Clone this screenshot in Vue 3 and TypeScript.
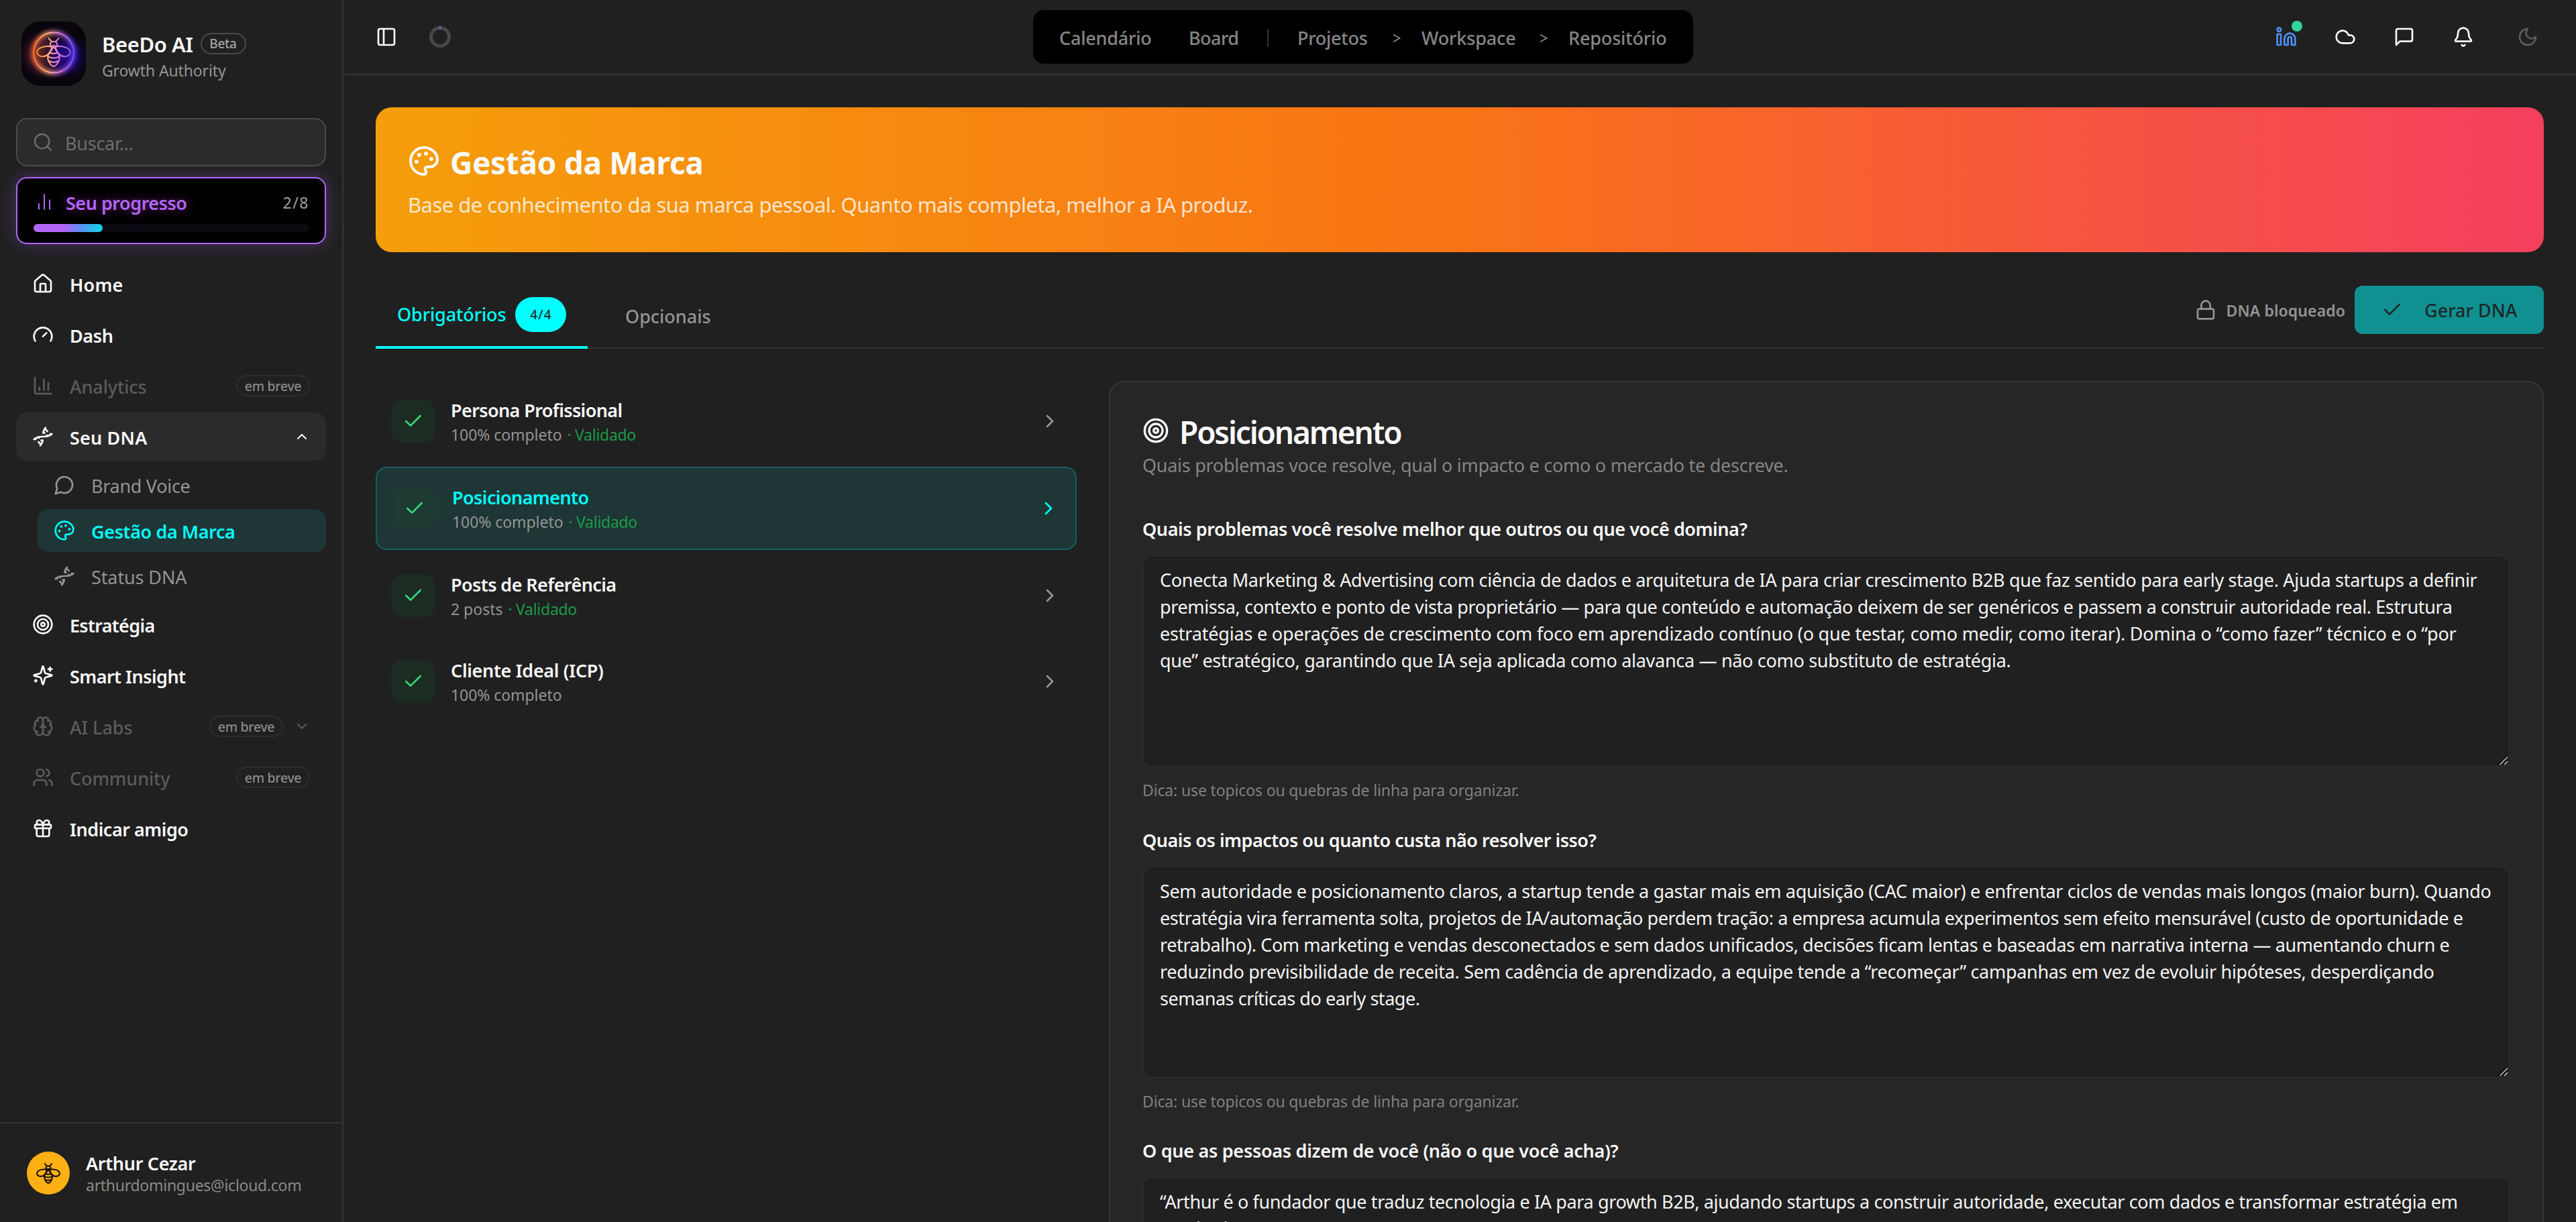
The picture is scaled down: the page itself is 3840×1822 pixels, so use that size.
<script setup lang="ts">
interface NavItem {
  label: string
  icon: string
  width: number
  muted?: boolean
  open?: boolean
  chevron?: string
  children?: { label: string; icon: string; width: number; active?: boolean }[]
}

type Line = [text: string, width: number]

const icons: Record<string, string> = {
  house:
    '<path d="M15 21v-8a1 1 0 0 0-1-1h-4a1 1 0 0 0-1 1v8"/><path d="M3 10a2 2 0 0 1 .709-1.528l7-5.999a2 2 0 0 1 2.582 0l7 5.999A2 2 0 0 1 21 10v9a2 2 0 0 1-2 2H5a2 2 0 0 1-2-2z"/>',
  gauge: '<path d="m12 14 4-4"/><path d="M3.34 19a10 10 0 1 1 17.32 0"/>',
  chart: '<path d="M3 3v16a2 2 0 0 0 2 2h16"/><path d="M18 17V9"/><path d="M13 17V5"/><path d="M8 17v-3"/>',
  bars: '<path d="M18 20V10"/><path d="M12 20V4"/><path d="M6 20v-6"/>',
  dna: '<path d="m10 16 1.5 1.5"/><path d="m14 8-1.5-1.5"/><path d="M15 2c-1.798 1.998-2.518 3.995-2.807 5.993"/><path d="m16.5 10.5 1 1"/><path d="m17 6-2.891-2.891"/><path d="M2 15c6.667-6 13.333 0 20-6"/><path d="m20 9 .891.891"/><path d="M3.109 14.109 4 15"/><path d="m6.5 12.5 1 1"/><path d="m7 18 2.891 2.891"/><path d="M9 22c1.798-1.998 2.518-3.995 2.807-5.993"/>',
  messageCircle: '<path d="M7.9 20A9 9 0 1 0 4 16.1L2 22Z"/>',
  palette:
    '<circle cx="13.5" cy="6.5" r=".5" fill="currentColor"/><circle cx="17.5" cy="10.5" r=".5" fill="currentColor"/><circle cx="8.5" cy="7.5" r=".5" fill="currentColor"/><circle cx="6.5" cy="12.5" r=".5" fill="currentColor"/><path d="M12 2C6.5 2 2 6.5 2 12s4.5 10 10 10c.926 0 1.648-.746 1.648-1.688 0-.437-.18-.835-.437-1.125-.29-.289-.438-.652-.438-1.125a1.64 1.64 0 0 1 1.668-1.668h1.996c3.051 0 5.555-2.503 5.555-5.554C21.965 6.012 17.461 2 12 2z"/>',
  target: '<circle cx="12" cy="12" r="10"/><circle cx="12" cy="12" r="6"/><circle cx="12" cy="12" r="2"/>',
  sparkles:
    '<path d="M9.937 15.5A2 2 0 0 0 8.5 14.063l-6.135-1.582a.5.5 0 0 1 0-.962L8.5 9.936A2 2 0 0 0 9.937 8.5l1.582-6.135a.5.5 0 0 1 .963 0L14.063 8.5A2 2 0 0 0 15.5 9.937l6.135 1.581a.5.5 0 0 1 0 .964L15.5 14.063a2 2 0 0 0-1.437 1.437l-1.582 6.135a.5.5 0 0 1-.963 0z"/><path d="M20 3v4"/><path d="M22 5h-4"/><path d="M4 17v2"/><path d="M5 18H3"/>',
  brain:
    '<path d="M12 5a3 3 0 1 0-5.997.125 4 4 0 0 0-2.526 5.77 4 4 0 0 0 .556 6.588A4 4 0 1 0 12 18Z"/><path d="M12 5a3 3 0 1 1 5.997.125 4 4 0 0 1 2.526 5.77 4 4 0 0 1-.556 6.588A4 4 0 1 1 12 18Z"/><path d="M15 13a4.5 4.5 0 0 1-3-4 4.5 4.5 0 0 1-3 4"/><path d="M17.599 6.5a3 3 0 0 0 .399-1.375"/><path d="M6.003 5.125A3 3 0 0 0 6.401 6.5"/><path d="M3.477 10.896a4 4 0 0 1 .585-.396"/><path d="M19.938 10.5a4 4 0 0 1 .585.396"/><path d="M6 18a4 4 0 0 1-1.967-.516"/><path d="M19.967 17.484A4 4 0 0 1 18 18"/>',
  users:
    '<path d="M16 21v-2a4 4 0 0 0-4-4H6a4 4 0 0 0-4 4v2"/><circle cx="9" cy="7" r="4"/><path d="M22 21v-2a4 4 0 0 0-3-3.87"/><path d="M16 3.13a4 4 0 0 1 0 7.75"/>',
  gift: '<rect x="3" y="8" width="18" height="4" rx="1"/><path d="M12 8v13"/><path d="M19 12v7a2 2 0 0 1-2 2H7a2 2 0 0 1-2-2v-7"/><path d="M7.5 8a2.5 2.5 0 0 1 0-5A4.8 8 0 0 1 12 8a4.8 8 0 0 1 4.5-5 2.5 2.5 0 0 1 0 5"/>',
  search: '<circle cx="11" cy="11" r="8"/><path d="m21 21-4.3-4.3"/>',
  panel: '<rect width="18" height="18" x="3" y="3" rx="2"/><path d="M9 3v18"/>',
  linkedin:
    '<path d="M16 8a6 6 0 0 1 6 6v7h-4v-7a2 2 0 0 0-2-2 2 2 0 0 0-2 2v7h-4v-7a6 6 0 0 1 6-6z"/><rect width="4" height="12" x="2" y="9"/><circle cx="4" cy="4" r="2"/>',
  cloud: '<path d="M17.5 19H9a7 7 0 1 1 6.71-9h1.79a4.5 4.5 0 1 1 0 9Z"/>',
  message: '<path d="M21 15a2 2 0 0 1-2 2H7l-4 4V5a2 2 0 0 1 2-2h14a2 2 0 0 1 2 2z"/>',
  bell: '<path d="M10.268 21a2 2 0 0 0 3.464 0"/><path d="M3.262 15.326A1 1 0 0 0 4 17h16a1 1 0 0 0 .74-1.673C19.41 13.956 18 12.499 18 8A6 6 0 0 0 6 8c0 4.499-1.411 5.956-2.738 7.326"/>',
  moon: '<path d="M12 3a6 6 0 0 0 9 9 9 9 0 1 1-9-9Z"/>',
  lock: '<rect width="18" height="11" x="3" y="11" rx="2"/><path d="M7 11V7a5 5 0 0 1 10 0v4"/>',
  check: '<path d="M20 6 9 17l-5-5"/>',
  up: '<path d="m18 15-6-6-6 6"/>',
  down: '<path d="m6 9 6 6 6-6"/>',
  right: '<path d="m9 18 6-6-6-6"/>',
}

const bee =
  '<path d="M42.5 36.5C41.5 27.5 54.5 27.5 53.5 36.5Z"/><path d="M44.5 29.5L40.5 25M51.5 29.5L55.5 25"/><path d="M45.5 38C38 35.500 24 38 23.500 45.500C23 52.500 34 54.500 39.500 49C43 45.500 44.500 41.500 45.500 38Z"/><path d="M50.500 38C58 35.500 72 38 72.500 45.500C73 52.500 62 54.500 56.500 49C53 45.500 51.500 41.500 50.500 38Z"/><path d="M48 37C46 42 41 47 39.500 51C38 57 43 66 48 67C53 66 58 57 56.500 51C55 47 50 42 48 37Z"/><path d="M42.500 46.500Q48 49.500 53.500 46.500M39.800 52.500Q48 56.500 56.200 52.500M41 59Q48 62.500 55 59"/>'

const nav: NavItem[] = [
  { label: 'Home', icon: 'house', width: 78 },
  { label: 'Dash', icon: 'gauge', width: 63 },
  { label: 'Analytics', icon: 'chart', width: 113, muted: true },
  {
    label: 'Seu DNA',
    icon: 'dna',
    width: 114,
    open: true,
    chevron: 'up',
    children: [
      { label: 'Brand Voice', icon: 'messageCircle', width: 146 },
      { label: 'Gestão da Marca', icon: 'palette', width: 213, active: true },
      { label: 'Status DNA', icon: 'dna', width: 141 },
    ],
  },
  { label: 'Estratégia', icon: 'target', width: 125 },
  { label: 'Smart Insight', icon: 'sparkles', width: 171 },
  { label: 'AI Labs', icon: 'brain', width: 92, muted: true, chevron: 'down' },
  { label: 'Community', icon: 'users', width: 148, muted: true },
  { label: 'Indicar amigo', icon: 'gift', width: 175 },
]

const sections = [
  { title: 'Persona Profissional', tw: 254, meta: '100% completo', mw: 164, valid: true },
  { title: 'Posicionamento', tw: 202, meta: '100% completo', mw: 164, valid: true, active: true },
  { title: 'Posts de Referência', tw: 245, meta: '2 posts', mw: 76, valid: true },
  { title: 'Cliente Ideal (ICP)', tw: 226, meta: '100% completo', mw: 164 },
]

const fields: { label: string; width: number; lines: Line[] }[] = [
  {
    label: 'Quais problemas você resolve melhor que outros ou que você domina?',
    width: 900,
    lines: [
      ['Conecta Marketing & Advertising com ciência de dados e arquitetura de IA para criar crescimento B2B que faz sentido para early stage. Ajuda startups a definir', 1962],
      ['premissa, contexto e ponto de vista proprietário — para que conteúdo e automação deixem de ser genéricos e passem a construir autoridade real. Estrutura', 1925],
      ['estratégias e operações de crescimento com foco em aprendizado contínuo (o que testar, como medir, como iterar). Domina o “como fazer” técnico e o “por', 1931],
      ['que” estratégico, garantindo que IA seja aplicada como alavanca — não como substituto de estratégia.', 1267],
    ],
  },
  {
    label: 'Quais os impactos ou quanto custa não resolver isso?',
    width: 675,
    lines: [
      ['Sem autoridade e posicionamento claros, a startup tende a gastar mais em aquisição (CAC maior) e enfrentar ciclos de vendas mais longos (maior burn). Quando', 1983],
      ['estratégia vira ferramenta solta, projetos de IA/automação perdem tração: a empresa acumula experimentos sem efeito mensurável (custo de oportunidade e', 1941],
      ['retrabalho). Com marketing e vendas desconectados e sem dados unificados, decisões ficam lentas e baseadas em narrativa interna — aumentando churn e', 1921],
      ['reduzindo previsibilidade de receita. Sem cadência de aprendizado, a equipe tende a “recomeçar” campanhas em vez de evoluir hipóteses, desperdiçando', 1898],
      ['semanas críticas do early stage.', 386],
    ],
  },
  {
    label: 'O que as pessoas dizem de você (não o que você acha)?',
    width: 708,
    lines: [
      ['“Arthur é o fundador que traduz tecnologia e IA para growth B2B, ajudando startups a construir autoridade, executar com dados e transformar estratégia em', 1933],
      ['resultado.”', 132],
    ],
  },
]

// Sets the tracking of a one-line text so that it spans the given number of pixels.
const vSpan = {
  mounted(el: HTMLElement, binding: { value: number }) {
    const range = document.createRange()
    range.selectNodeContents(el)
    const natural = range.getBoundingClientRect().width
    const count = (el.textContent ?? '').trim().length
    el.style.letterSpacing = `${((binding.value + 1.5 - natural) / count).toFixed(3)}px`
  },
}
</script>

<template>
  <div class="app">
    <aside class="sidebar">
      <div class="brand">
        <svg class="logo" viewBox="0 0 96 96">
          <defs>
            <linearGradient id="neon" gradientUnits="userSpaceOnUse" x1="18" y1="46" x2="78" y2="46">
              <stop offset="0" stop-color="#ff6a2b" />
              <stop offset=".35" stop-color="#ffb27a" />
              <stop offset=".6" stop-color="#e07ad8" />
              <stop offset="1" stop-color="#6a4dff" />
            </linearGradient>
            <radialGradient id="warm" gradientUnits="userSpaceOnUse" cx="34" cy="50" r="40">
              <stop offset="0" stop-color="#5a2a1c" />
              <stop offset=".5" stop-color="#4a1b2c" />
              <stop offset="1" stop-color="#0a0510" stop-opacity="0" />
            </radialGradient>
            <radialGradient id="cold" gradientUnits="userSpaceOnUse" cx="66" cy="52" r="38">
              <stop offset="0" stop-color="#2a0a8c" />
              <stop offset=".5" stop-color="#1a0566" stop-opacity=".9" />
              <stop offset="1" stop-color="#08030f" stop-opacity="0" />
            </radialGradient>
            <filter id="glow" x="-40%" y="-40%" width="180%" height="180%">
              <feGaussianBlur stdDeviation="3" />
            </filter>
          </defs>
          <rect width="96" height="96" fill="#09050c" />
          <rect width="96" height="96" fill="url(#warm)" />
          <rect width="96" height="96" fill="url(#cold)" />
          <circle cx="48" cy="46.500" r="30" fill="none" stroke="url(#neon)" stroke-width="5" filter="url(#glow)" />
          <circle cx="48" cy="46.500" r="30" fill="none" stroke="url(#neon)" stroke-width="2" />
          <g fill="none" stroke="url(#neon)" stroke-width="2" stroke-linecap="round" stroke-linejoin="round" v-html="bee" />
        </svg>
        <div class="brand-text">
          <div class="brand-row">
            <strong v-span="134">BeeDo AI</strong>
            <span class="beta"><span v-span="39">Beta</span></span>
          </div>
          <span v-span="183" class="tagline">Growth Authority</span>
        </div>
      </div>

      <div class="search">
        <svg class="icon" viewBox="0 0 24 24" v-html="icons.search" />
        <span v-span="100">Buscar...</span>
      </div>

      <div class="progress">
        <div class="progress-head">
          <svg class="icon" viewBox="0 0 24 24" v-html="icons.bars" />
          <strong v-span="179">Seu progresso</strong>
          <span v-span="38" class="count">2/8</span>
        </div>
        <div class="track"><div class="fill" /></div>
      </div>

      <nav class="menu">
        <template v-for="item in nav" :key="item.label">
          <div class="item" :class="{ muted: item.muted, open: item.open }">
            <svg class="icon" viewBox="0 0 24 24" v-html="icons[item.icon]" />
            <span v-span="item.width" class="item-label">{{ item.label }}</span>
            <span v-if="item.muted" class="soon"><span v-span="83">em breve</span></span>
            <svg v-if="item.chevron" class="chev" viewBox="0 0 24 24" v-html="icons[item.chevron]" />
          </div>
          <div v-for="sub in item.children" :key="sub.label" class="sub" :class="{ active: sub.active }">
            <svg class="icon" viewBox="0 0 24 24" v-html="icons[sub.icon]" />
            <span v-span="sub.width">{{ sub.label }}</span>
          </div>
        </template>
      </nav>

      <div class="user">
        <div class="avatar">
          <svg viewBox="0 0 96 96" v-html="bee" />
        </div>
        <div class="user-text">
          <strong v-span="162">Arthur Cezar</strong>
          <span v-span="320">arthurdomingues@icloud.com</span>
        </div>
      </div>
    </aside>

    <div class="main">
      <header class="topbar">
        <div class="top-left">
          <svg class="icon" viewBox="0 0 24 24" v-html="icons.panel" />
          <svg class="ring" viewBox="0 0 32 32">
            <circle cx="16" cy="16" r="13.500" stroke="#484848" stroke-width="5" fill="none" />
            <path d="M16 .2V5" stroke="#a66be0" stroke-width="1.500" />
          </svg>
        </div>
        <div class="crumbs">
          <span v-span="136" class="c1">Calendário</span>
          <span v-span="73" class="c2">Board</span>
          <i class="bar" />
          <span v-span="103" class="c3">Projetos</span>
          <svg class="gt" viewBox="0 0 12 16"><path d="M1 2.500L10.500 8L1 13.500" /></svg>
          <span v-span="139" class="c4">Workspace</span>
          <svg class="gt" viewBox="0 0 12 16"><path d="M1 2.500L10.500 8L1 13.500" /></svg>
          <span v-span="145">Repositório</span>
        </div>
        <div class="top-right">
          <div class="linkedin">
            <svg class="icon" viewBox="0 0 24 24" v-html="icons.linkedin" />
            <i class="dot" />
          </div>
          <svg class="icon" viewBox="0 0 24 24" v-html="icons.cloud" />
          <svg class="icon" viewBox="0 0 24 24" v-html="icons.message" />
          <svg class="icon" viewBox="0 0 24 24" v-html="icons.bell" />
          <svg class="icon moon" viewBox="0 0 24 24" v-html="icons.moon" />
        </div>
      </header>

      <main class="content">
        <section class="banner">
          <h1>
            <svg class="icon" viewBox="0 0 24 24" v-html="icons.palette" />
            <span v-span="376">Gestão da Marca</span>
          </h1>
          <p v-span="1258">Base de conhecimento da sua marca pessoal. Quanto mais completa, melhor a IA produz.</p>
        </section>

        <div class="tabs">
          <div class="tab active">
            <span v-span="161">Obrigatórios</span>
            <span class="badge"><span v-span="31">4/4</span></span>
          </div>
          <div class="tab second"><span v-span="126">Opcionais</span></div>
          <div class="actions">
            <svg class="icon" viewBox="0 0 24 24" v-html="icons.lock" />
            <span v-span="176" class="locked">DNA bloqueado</span>
            <button class="generate" type="button">
              <svg class="icon" viewBox="0 0 24 24" v-html="icons.check" />
              <span v-span="137">Gerar DNA</span>
            </button>
          </div>
        </div>

        <div class="columns">
          <div class="list">
            <div v-for="s in sections" :key="s.title" class="row" :class="{ active: s.active }">
              <div class="state"><svg class="icon" viewBox="0 0 24 24" v-html="icons.check" /></div>
              <div class="row-text">
                <strong v-span="s.tw">{{ s.title }}</strong>
                <div class="meta">
                  <span v-span="s.mw">{{ s.meta }}</span>
                  <span v-if="s.valid" v-span="101" class="valid">· Validado</span>
                </div>
              </div>
              <svg class="icon" viewBox="0 0 24 24" v-html="icons.right" />
            </div>
          </div>

          <section class="panel">
            <h2>
              <svg class="icon" viewBox="0 0 24 24" v-html="icons.target" />
              <span v-span="329">Posicionamento</span>
            </h2>
            <p v-span="961" class="lead">Quais problemas voce resolve, qual o impacto e como o mercado te descreve.</p>
            <div v-for="f in fields" :key="f.label" class="field">
              <label v-span="f.width">{{ f.label }}</label>
              <div class="area">
                <div v-for="line in f.lines" :key="line[0]" v-span="line[1]" class="line">{{ line[0] }}</div>
                <svg class="grip" viewBox="0 0 14 14">
                  <path d="M0 12.500L12.500 0M6.500 12.500L12.500 6.500" stroke="#000" />
                  <path d="M1.500 13L13 1.500M8 13L13 8" stroke="#c8c8c8" />
                </svg>
              </div>
              <span v-span="560" class="hint">Dica: use topicos ou quebras de linha para organizar.</span>
            </div>
          </section>
        </div>
      </main>
    </div>
  </div>
</template>

<style>
html,
body {
  background: #202020;
  overflow: hidden;
}
</style>

<style scoped>
.app {
  display: flex;
  width: 3840px;
  height: 1822px;
  overflow: hidden;
  background: #202020;
  color: #fafafa;
  font-family: 'Noto Sans', 'Open Sans', sans-serif;
  font-size: 27px;
  line-height: 40px;
  white-space: nowrap;
}

.app *,
.app {
  box-sizing: border-box;
}

strong {
  font-weight: 600;
}

.icon {
  display: block;
  flex: none;
  width: 32px;
  height: 32px;
  fill: none;
  stroke: currentColor;
  stroke-width: 2;
  stroke-linecap: round;
  stroke-linejoin: round;
}

/* Sidebar */
.sidebar {
  display: flex;
  flex-direction: column;
  flex: none;
  width: 512px;
  border-right: 2px solid #363636;
}

.brand {
  display: flex;
  align-items: center;
  gap: 24px;
  height: 96px;
  margin: 32px 32px 48px;
}

.brand-text {
  padding-top: 9px;
}

.logo {
  width: 96px;
  height: 96px;
  border-radius: 28px;
}

.brand-row {
  display: flex;
  align-items: center;
  gap: 11px;
  height: 40px;
}

.brand-row strong {
  font-size: 31px;
}

.beta {
  display: flex;
  align-items: center;
  justify-content: center;
  width: 68px;
  height: 32px;
  margin-top: -3px;
  border: 2px solid #4a4a4a;
  border-radius: 16px;
  color: #a3a3a3;
  font-size: 19px;
  font-weight: 500;
}

.tagline {
  display: block;
  height: 38px;
  margin-top: -1px;
  color: #949494;
  font-size: 23px;
}

.search {
  display: flex;
  align-items: center;
  gap: 17px;
  height: 72px;
  margin: 0 24px 16px;
  padding: 0 22px;
  border: 2px solid #4a4a4a;
  border-radius: 16px;
  background: #2b2b2b;
  color: #6d6d6d;
}

.search span {
  padding-top: 4px;
}

.search .icon {
  stroke-width: 1.75;
}

.progress {
  height: 100px;
  margin: 0 24px 23px;
  padding: 15px 24px 0;
  border: 2px solid #b266f7;
  border-radius: 16px;
  background: #000;
  box-shadow: 0 0 24px rgba(168, 85, 247, 0.3);
}

.progress-head {
  display: flex;
  align-items: center;
  gap: 16px;
  height: 40px;
  color: #b266f7;
}

.progress-head .icon {
  stroke-width: 1.5;
}

.progress-head strong {
  padding-top: 3px;
  text-shadow: 0 0 16px rgba(217, 70, 239, 0.55);
}

.count {
  margin: 1px -1px 0 auto;
  color: #a0a0a0;
  font-size: 23px;
}

.track {
  height: 12px;
  margin-top: 13px;
  border-radius: 6px;
  background: #0e0a12;
}

.fill {
  width: 25.2%;
  height: 12px;
  border-radius: 6px;
  background: linear-gradient(90deg, #b266f7 45%, #5b8ff0 68%, #18cfe8 94%);
}

.menu {
  display: flex;
  flex-direction: column;
  gap: 4px;
  padding: 0 24px;
}

.item {
  display: flex;
  align-items: center;
  height: 72px;
  padding: 0 24px;
  border-radius: 16px;
  font-weight: 600;
}

.item-label {
  flex: 1;
  margin-left: 24px;
  padding-top: 3px;
}

.item.open {
  background: #2b2b2b;
}

.item.muted {
  color: #5b5b5b;
  font-weight: 500;
}

.soon {
  display: flex;
  align-items: center;
  justify-content: center;
  width: 110px;
  height: 32px;
  padding-top: 2px;
  border: 2px solid #2d2d2d;
  border-radius: 16px;
  color: #8b8b8b;
  font-size: 19.5px;
  font-weight: 500;
}

.chev {
  width: 24px;
  height: 24px;
  margin-left: 16px;
  fill: none;
  stroke: currentColor;
  stroke-width: 2;
  stroke-linecap: round;
  stroke-linejoin: round;
}

.sub {
  display: flex;
  align-items: center;
  gap: 24px;
  height: 64px;
  margin-left: 32px;
  padding: 0 24px;
  border-radius: 16px;
  color: #949494;
}

.sub.active {
  background: #1e3635;
  color: #00ffff;
  font-weight: 600;
}

.sub span {
  padding-top: 3px;
}

.user {
  display: flex;
  align-items: center;
  gap: 24px;
  height: 149px;
  margin-top: auto;
  padding: 0 40px;
  border-top: 2px solid #363636;
}

.avatar {
  width: 64px;
  height: 64px;
  border-radius: 50%;
  background: #ffb014;
}

.avatar svg {
  display: block;
  width: 66px;
  height: 66px;
  margin: 1px 0 0 -1px;
  fill: none;
  stroke: #16100c;
  stroke-width: 3;
  stroke-linecap: round;
  stroke-linejoin: round;
}

.user-text {
  display: flex;
  flex-direction: column;
  padding-top: 4px;
  line-height: 32px;
}

.user-text span {
  color: #8a8a8a;
  font-size: 23px;
}

/* Top bar */
.main {
  display: flex;
  flex-direction: column;
  flex: 1;
  min-width: 0;
}

.topbar {
  display: flex;
  align-items: center;
  flex: none;
  height: 112px;
  padding: 0 56px 0 48px;
  border-bottom: 2px solid #363636;
}

.top-left {
  display: flex;
  align-items: center;
  gap: 48px;
  width: 980px;
}

.ring {
  width: 32px;
  height: 32px;
}

.crumbs {
  display: flex;
  align-items: center;
  width: 984px;
  height: 80px;
  padding: 3px 37px 0 39px;
  border-radius: 16px;
  background: #000;
  color: #868686;
  font-weight: 500;
}

.crumbs .c1 {
  width: 193px;
}

.crumbs .c2 {
  width: 117px;
}

.bar {
  width: 2px;
  height: 27px;
  margin-right: 43px;
  background: #333;
}

.crumbs .c3 {
  width: 142px;
}

.gt {
  width: 12px;
  height: 16px;
  margin-right: 31px;
  fill: none;
  stroke: #808080;
  stroke-width: 2;
}

.crumbs .c4 {
  width: 176px;
}

.top-right {
  display: flex;
  align-items: center;
  gap: 56px;
  margin-left: auto;
}

.linkedin {
  position: relative;
  color: #4f8ff7;
}

.dot {
  position: absolute;
  top: -8px;
  right: -8px;
  width: 16px;
  height: 16px;
  border-radius: 50%;
  background: #34d399;
}

.moon {
  margin-left: 8px;
  color: #5c5c5c;
}

/* Content */
.content {
  flex: 1;
  padding: 48px 48px 0;
}

.banner {
  height: 216px;
  padding: 52px 48px 0;
  border-radius: 24px;
  background: linear-gradient(90deg, #f59e0b, #f97316 50%, #f43f5e);
}

h1 {
  display: flex;
  align-items: center;
  gap: 15px;
  height: 56px;
  margin: 0;
  font-size: 46px;
  font-weight: 700;
}

h1 .icon {
  width: 48px;
  height: 48px;
}

h1 span {
  padding-top: 4px;
}

.banner p {
  margin: 17px 0 0;
  color: rgba(255, 255, 255, 0.8);
  font-size: 31px;
}

.tabs {
  display: flex;
  align-items: center;
  height: 144px;
  padding-top: 47px;
  border-bottom: 2px solid #333;
}

.tab {
  display: flex;
  align-items: center;
  gap: 14px;
  height: 96px;
  margin-bottom: -2px;
  padding-left: 32px;
  color: #949494;
  font-weight: 500;
}

.tab.active {
  width: 316px;
  padding-bottom: 2px;
  border-bottom: 4px solid #00ffff;
  color: #00ffff;
}

.tab.second {
  margin-left: 24px;
}

.badge {
  display: flex;
  align-items: center;
  justify-content: center;
  width: 76px;
  height: 52px;
  border-radius: 26px;
  background: #00ffff;
  color: #1f2a2a;
  font-size: 19px;
}

.actions {
  display: flex;
  align-items: center;
  margin: -18px 0 0 auto;
  color: #949494;
}

.locked {
  margin: 3px 14px 0 15px;
  font-size: 23px;
  font-weight: 600;
}

.generate {
  display: flex;
  align-items: center;
  gap: 32px;
  width: 282px;
  height: 72px;
  padding: 0 0 0 40px;
  border: 0;
  border-radius: 12px;
  background: #109090;
  color: #1b2828;
  font: inherit;
  font-weight: 500;
}

.generate span {
  padding-top: 2px;
}

.columns {
  display: flex;
  gap: 48px;
  padding-top: 48px;
}

.list {
  display: flex;
  flex-direction: column;
  flex: none;
  gap: 8px;
  width: 1045px;
}

.row {
  display: flex;
  align-items: center;
  gap: 24px;
  height: 120px;
  padding: 0 24px;
  border-radius: 16px;
  color: #949494;
}

.row.active {
  height: 124px;
  border: 2px solid #16605f;
  background: #1e3635;
  color: #00ffff;
}

.state {
  display: flex;
  align-items: center;
  justify-content: center;
  width: 64px;
  height: 64px;
  border-radius: 16px;
  background: #1c2c23;
  color: #34d978;
}

.row.active .state {
  background: #1d3a33;
}

.row-text {
  flex: 1;
  padding-top: 4px;
  line-height: 36px;
}

.row-text strong {
  display: block;
  color: #fafafa;
}

.row.active .row-text strong {
  color: #00ffff;
}

.meta {
  display: flex;
  gap: 8px;
  color: #949494;
  font-size: 23px;
}

.valid {
  color: #1a9a4a;
}

.panel {
  flex: 1;
  height: 1300px;
  padding: 44px 48px 0;
  border: 2px solid #363636;
  border-radius: 24px;
  background: #262626;
}

h2 {
  display: flex;
  align-items: center;
  gap: 15px;
  height: 56px;
  margin: 0;
  font-size: 46px;
  font-weight: 600;
}

h2 .icon {
  width: 40px;
  height: 40px;
}

h2 span {
  padding-top: 3px;
}

.lead {
  margin: 4px 0 55px;
  color: #858585;
}

.field {
  height: 463.5px;
}

.field label {
  display: block;
  height: 40px;
  margin-bottom: 18px;
  font-weight: 600;
}

.area {
  position: relative;
  height: 317px;
  padding: 16px 24px;
  border: 2px solid #2b2b2b;
  border-radius: 14px;
  background: #202020;
  color: #f4f4f4;
}

.grip {
  position: absolute;
  right: 1px;
  bottom: 1px;
  width: 14px;
  height: 14px;
  fill: none;
  stroke-width: 1.5;
}

.hint {
  display: block;
  margin-top: 14px;
  color: #808080;
  font-size: 23px;
}
</style>
